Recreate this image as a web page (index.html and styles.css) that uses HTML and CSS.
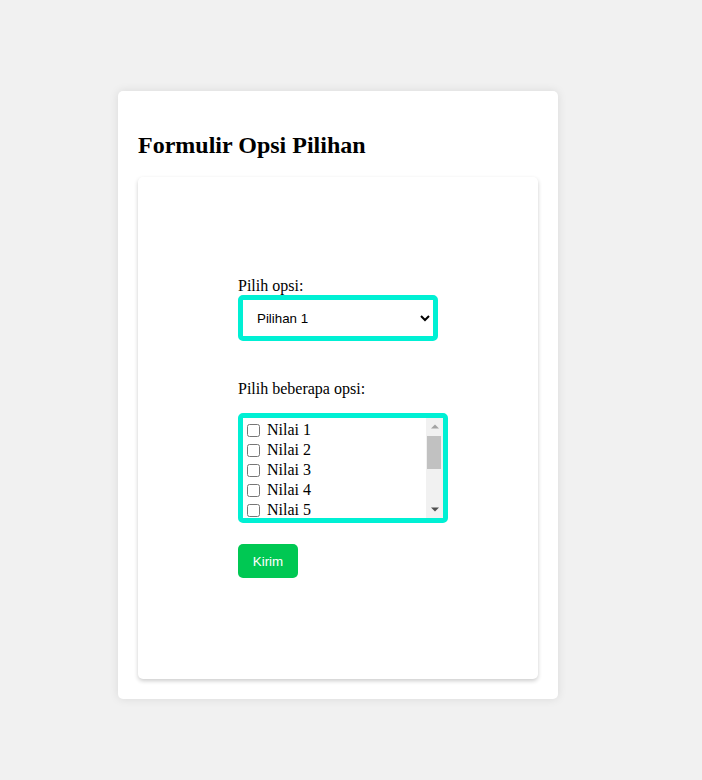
FILE: index.html
```html
<!DOCTYPE html>
<html lang="id">
<head>
<meta charset="utf-8">
<title>Formulir Opsi Pilihan</title>
<link rel="stylesheet" href="styles.css">
</head>
<body>
<div class="card">
  <h2 class="title">Formulir Opsi Pilihan</h2>
  <div class="panel">
    <form class="form">
      <label class="field-label" for="opsi">Pilih opsi:</label>
      <select id="opsi" class="select">
        <option>Pilihan 1</option>
        <option>Pilihan 2</option>
        <option>Pilihan 3</option>
      </select>
      <div class="field-label second">Pilih beberapa opsi:</div>
      <div class="multi">
        <div class="list">
          <label class="item"><input type="checkbox"> Nilai 1</label>
          <label class="item"><input type="checkbox"> Nilai 2</label>
          <label class="item"><input type="checkbox"> Nilai 3</label>
          <label class="item"><input type="checkbox"> Nilai 4</label>
          <label class="item"><input type="checkbox"> Nilai 5</label>
          <label class="item"><input type="checkbox"> Nilai 6</label>
          <label class="item"><input type="checkbox"> Nilai 7</label>
          <label class="item"><input type="checkbox"> Nilai 8</label>
          <label class="item"><input type="checkbox"> Nilai 9</label>
          <label class="item"><input type="checkbox"> Nilai 10</label>
        </div>
        <div class="sbar" aria-hidden="true">
          <div class="sbtn">
            <svg width="8" height="5" viewBox="0 0 8 5"><path d="M0 4.5 L4 0.5 L8 4.5 Z" fill="#a3a3a3"/></svg>
          </div>
          <div class="strack"><div class="sthumb"></div></div>
          <div class="sbtn">
            <svg width="8" height="5" viewBox="0 0 8 5"><path d="M0 0.5 L8 0.5 L4 4.5 Z" fill="#505050"/></svg>
          </div>
        </div>
      </div>
      <button type="button" class="btn">Kirim</button>
    </form>
  </div>
</div>
</body>
</html>
```

FILE: styles.css
```css
html, body {
  margin: 0;
  padding: 0;
}
body {
  background: #f1f1f1;
  font-family: "Liberation Serif", "Times New Roman", serif;
  font-size: 16px;
  color: #000;
  padding: 91px 0 0 118px;
  min-height: 780px;
  box-sizing: border-box;
}
.card {
  width: 440px;
  box-sizing: border-box;
  background: #fff;
  border-radius: 5px;
  box-shadow: 0 0 10px rgba(0, 0, 0, 0.1);
  padding: 20px 20px 20px;
}
.title {
  margin: 20px 0 18px;
  font-size: 24px;
  font-weight: bold;
  line-height: 28px;
}
.panel {
  background: #fff;
  border-radius: 5px;
  box-shadow: 0 2px 4px rgba(0, 0, 0, 0.2);
  padding: 100px;
  height: 502px;
  box-sizing: border-box;
}
.form {
  display: flex;
  flex-direction: column;
  align-items: flex-start;
}
.field-label {
  display: block;
  line-height: 18px;
}
.second {
  margin-top: 39px;
  margin-bottom: 15px;
}
.select {
  width: 200px;
  height: 46px;
  box-sizing: border-box;
  border: 5px solid #00f0d4;
  border-radius: 5px;
  padding: 0 5px 0 10px;
  font-family: "Liberation Sans", Arial, sans-serif;
  font-size: 13.33px;
  background: #fff;
  color: #000;
  outline: none;
}
.multi {
  display: flex;
  width: 210px;
  height: 110px;
  box-sizing: border-box;
  border: 5px solid #00f0d4;
  border-radius: 5px;
  background: #fff;
}
.list {
  flex: 1;
  overflow-y: auto;
  padding-top: 2px;
  scrollbar-width: none;
}
.list::-webkit-scrollbar {
  display: none;
}
.sbar {
  width: 17px;
  display: flex;
  flex-direction: column;
  background: #f1f1f1;
}
.sbtn {
  height: 17px;
  display: flex;
  align-items: center;
  justify-content: center;
}
.sbtn svg {
  display: block;
}
.strack {
  flex: 1;
  padding: 1px 2px 0 1px;
}
.sthumb {
  height: 33px;
  background: #c1c1c1;
}
.item {
  display: block;
  line-height: 20px;
  height: 20px;
  white-space: nowrap;
}
.item input {
  margin: 3px 3px 3px 4px;
  vertical-align: -2px;
}
.btn {
  margin-top: 21px;
  width: 60px;
  height: 34px;
  border: none;
  border-radius: 5px;
  background: #00c853;
  color: #fff;
  font-family: "Liberation Sans", Arial, sans-serif;
  font-size: 13.33px;
  padding: 0;
}
```
